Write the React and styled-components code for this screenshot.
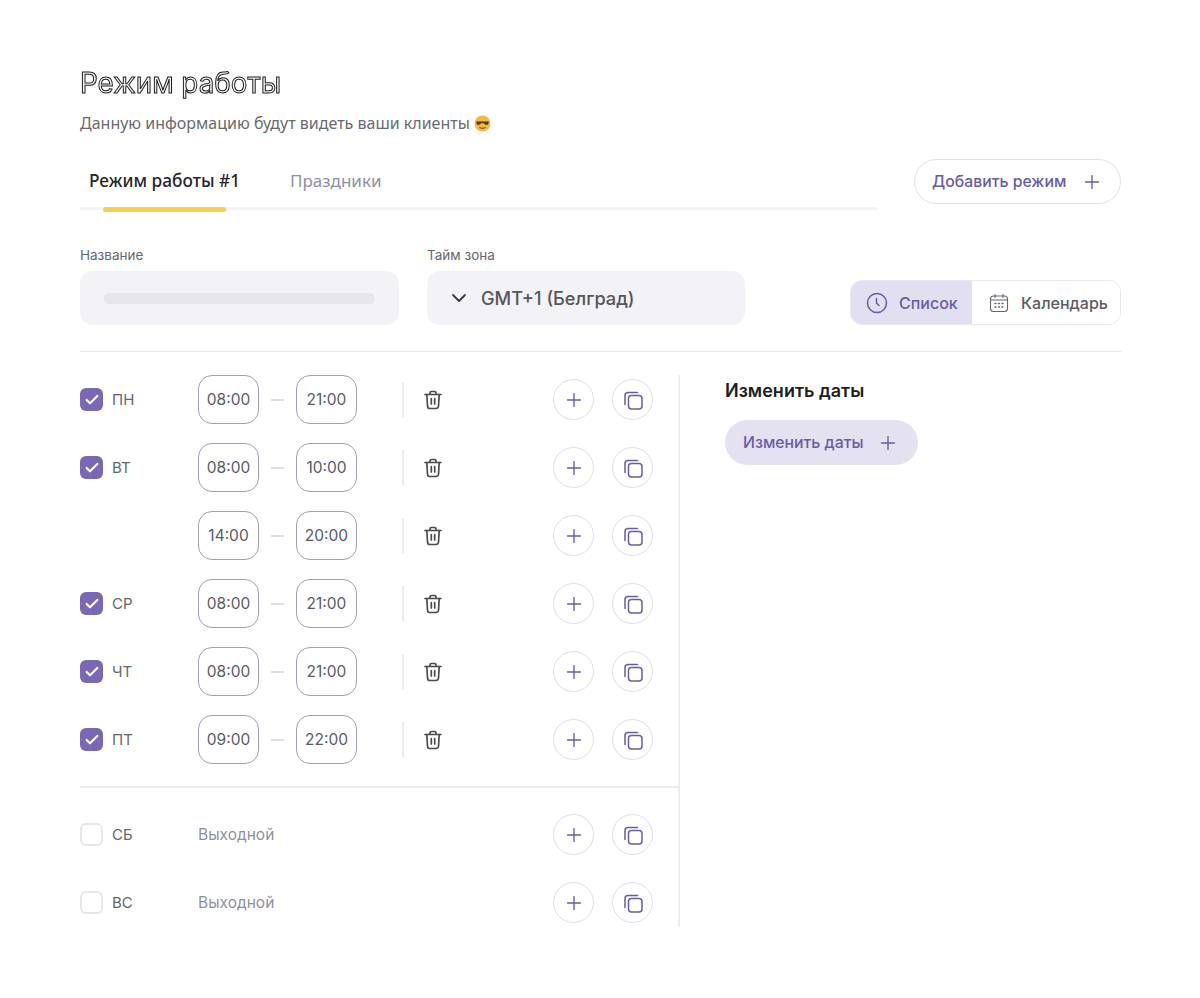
import React from 'react'
import styled, { createGlobalStyle } from 'styled-components'
import { Plus, ChevronDown, Check } from 'lucide-react'

const GlobalStyle = createGlobalStyle`
    html, body {
        margin: 0;
        padding: 0;
        background: #ffffff;
    }
    body {
        font-family: "Inter", "Noto Sans", sans-serif;
    }
`

const Page = styled.div`
    width: 1200px;
    height: 998px;
    box-sizing: border-box;
    padding: 68px 79px 0 80px;
`

const Title = styled.h1`
    margin: 0;
    height: 30px;
    font-size: 27.8px;
    line-height: 30px;
    font-weight: 400;
    color: #f4f4f4;
    -webkit-text-stroke: 1px #1a1a1e;
    will-change: transform;
`

const Subtitle = styled.p`
    display: flex;
    align-items: center;
    gap: 4px;
    margin: 15px 0 0;
    height: 20px;
    font-family: "Noto Sans", sans-serif;
    font-size: 16px;
    line-height: 20px;
    color: #6a6a72;
`

const TabsRow = styled.div`
    display: flex;
    justify-content: space-between;
    margin-top: 26px;
`

const Tabs = styled.div`
    position: relative;
    width: 797px;
    height: 51px;
    display: flex;
    gap: 50px;
    padding: 11px 0 0 9px;
    box-sizing: border-box;
    border-bottom: 3px solid #f4f4f7;
`

const Tab = styled.div`
    font-family: "Noto Sans", sans-serif;
    font-size: ${p => (p.$active ? '17.3px' : '17px')};
    line-height: 22px;
    font-weight: ${p => (p.$active ? 500 : 400)};
    color: ${p => (p.$active ? '#26262b' : '#8f8fa3')};
`

const TabMarker = styled.div`
    position: absolute;
    left: 23px;
    bottom: -5px;
    width: 123px;
    height: 5px;
    border-radius: 3px;
    background: #f5cf4e;
`

const AddButton = styled.button`
    width: 207px;
    height: 45px;
    box-sizing: border-box;
    display: flex;
    align-items: center;
    justify-content: space-between;
    padding: 0 17px;
    background: #fff;
    border: 1px solid #e2e0f0;
    border-radius: 23px;
    font: 500 15.8px "Inter", sans-serif;
    color: #6a5ba8;
`

const FieldsRow = styled.div`
    display: flex;
    align-items: flex-end;
    margin-top: 37px;
    padding-bottom: 26px;
    border-bottom: 1px solid #e6e6ea;
`

const Field = styled.div`
    width: ${p => p.$width}px;
    margin-right: 28px;
`

const Label = styled.div`
    font-size: 13.5px;
    line-height: 16px;
    color: #66666e;
    margin-bottom: 8px;
`

const FieldBox = styled.div`
    height: 54px;
    box-sizing: border-box;
    display: flex;
    align-items: center;
    gap: 10px;
    padding: 0 24px 0 20px;
    border-radius: 13px;
    background: #f2f2f7;
    font-size: 18.2px;
    font-weight: 500;
    color: #55555e;
`

const Skeleton = styled.div`
    flex: 1;
    height: 11px;
    margin-left: 4px;
    border-radius: 6px;
    background: #e6e6eb;
`

const Segmented = styled.div`
    margin-left: auto;
    width: 271px;
    height: 45px;
    box-sizing: border-box;
    display: flex;
    border: 1px solid #e8e8ee;
    border-radius: 12px;
    overflow: hidden;
`

const Segment = styled.div`
    width: ${p => (p.$active ? '122px' : '149px')};
    display: flex;
    align-items: center;
    gap: ${p => (p.$active ? '11px' : '12px')};
    padding-left: ${p => (p.$active ? '15px' : '17px')};
    box-sizing: border-box;
    background: ${p => (p.$active ? '#e2e0f0' : '#fff')};
    color: ${p => (p.$active ? '#6a5ba8' : '#5c5c64')};
    font-size: 16px;
    font-weight: 500;
`

const Columns = styled.div`
    display: flex;
    margin-top: 23px;
`

const Schedule = styled.div`
    width: 600px;
    height: 552px;
    border-right: 2px solid #ececf0;
    box-sizing: border-box;
`

const Row = styled.div`
    height: 49px;
    margin-bottom: 19px;
    display: flex;
    align-items: center;
`

const Divider = styled.div`
    height: 2px;
    margin: 22px 0 22px;
    background: #ececf0;
`

const CheckBox = styled.div`
    width: 23px;
    height: 23px;
    box-sizing: border-box;
    border-radius: 6px;
    display: flex;
    align-items: center;
    justify-content: center;
    background: ${p => (p.$checked ? '#7b68b5' : '#fff')};
    border: ${p => (p.$checked ? 'none' : '2px solid #e6e6ea')};
    color: #fff;
`

const Day = styled.div`
    width: 86px;
    margin-left: 9px;
    font-size: 15px;
    color: #66666e;
`

const DayColumn = styled.div`
    width: 118px;
    display: flex;
    align-items: center;
`

const TimeBox = styled.div`
    width: 61px;
    height: 49px;
    box-sizing: border-box;
    display: flex;
    align-items: center;
    justify-content: center;
    border: 1.5px solid #a0a0b0;
    border-radius: 14px;
    font-size: 15.5px;
    color: #5a5a64;
`

const Dash = styled.div`
    width: 13px;
    height: 2px;
    margin: 0 12px;
    background: #dedee3;
`

const Separator = styled.div`
    width: 2px;
    height: 35px;
    margin-left: 45px;
    background: #ececf0;
`

const TrashSlot = styled.div`
    margin-left: 19px;
    width: 20px;
    height: 20px;
    color: #4a4a50;
`

const Off = styled.div`
    font-size: 15.5px;
    color: #8f8fa3;
`

const Actions = styled.div`
    margin-left: auto;
    margin-right: 25px;
    display: flex;
    gap: 18px;
`

const RoundButton = styled.div`
    width: 41px;
    height: 41px;
    box-sizing: border-box;
    display: flex;
    align-items: center;
    justify-content: center;
    border: 1px solid #dfdcf0;
    border-radius: 50%;
    color: #6a5ba8;
`

const Side = styled.div`
    margin-left: 45px;
`

const SideTitle = styled.div`
    height: 33px;
    font-size: 18px;
    line-height: 32px;
    font-weight: 600;
    color: #1d1d22;
`

const ChangeButton = styled.div`
    width: 193px;
    height: 45px;
    margin-top: 12px;
    box-sizing: border-box;
    display: flex;
    align-items: center;
    justify-content: space-between;
    padding: 0 19px 0 18px;
    border-radius: 23px;
    background: #e4e1f1;
    color: #6a5ba8;
    font-size: 15.8px;
    font-weight: 500;
`

function ShadesEmoji() {
    return (
        <svg width="17" height="17" viewBox="0 0 16 16">
            <circle cx="8" cy="8" r="7.5" fill="#f5b93c" />
            <path d="M2 6h12l-.6 2.6c-.9.8-3 .8-4-.9h-2.800c-1 1.700-3.100 1.700-4 .9z" fill="#4b3a2a" />
            <path d="M5 11.500c1.800 1.200 4.200 1.200 6 0" stroke="#a5551f" strokeWidth="1.200" fill="none" />
        </svg>
    )
}

function ClockIcon() {
    return (
        <svg width="22" height="22" viewBox="0 0 22 22" fill="none" stroke="currentColor" strokeWidth="1.500" strokeLinecap="round">
            <circle cx="11" cy="11" r="9.500" />
            <path d="M10.500 6.500v4.500l2.500 2.500" />
        </svg>
    )
}

function CalendarIcon() {
    return (
        <svg width="20" height="20" viewBox="0 0 20 20" fill="none" stroke="#66666e" strokeWidth="1.100" strokeLinecap="round">
            <rect x="1.500" y="3" width="17" height="15.500" rx="3" />
            <path d="M1.500 7h17M6 1.500v3M14 1.500v3" />
            <path d="M6 10.500h1M9.500 10.500h1M13 10.500h1M6 14h1M9.500 14h1M13 14h1" strokeWidth="1.400" />
        </svg>
    )
}

function TrashIcon() {
    return (
        <svg width="20" height="20" viewBox="0 0 20 20" fill="none" stroke="currentColor" strokeWidth="1.700" strokeLinecap="round" strokeLinejoin="round">
            <path d="M2 4.500h16M7 4.500V3a1.500 1.500 0 0 1 1.500-1.500h3A1.500 1.500 0 0 1 13 3v1.500" />
            <path d="M3.800 4.500l.7 11.500a2.500 2.500 0 0 0 2.500 2.500h6a2.500 2.500 0 0 0 2.500-2.500l.7-11.500" />
            <path d="M8.300 8.500v5.500M11.700 8.500v5.500" />
        </svg>
    )
}

function CopyIcon() {
    return (
        <svg width="20" height="20" viewBox="0 0 20 20" fill="none" stroke="currentColor" strokeWidth="1.500" strokeLinecap="round" strokeLinejoin="round">
            <rect x="5.500" y="5.500" width="13.500" height="13.500" rx="3" />
            <path d="M14.500 2.500 H5 A3 3 0 0 0 2 5.500 V14.500" />
        </svg>
    )
}

function RowActions() {
    return (
        <Actions>
            <RoundButton><Plus size={22} strokeWidth={1.5} /></RoundButton>
            <RoundButton><CopyIcon /></RoundButton>
        </Actions>
    )
}

const workRows = [
    { day: 'ПН', from: '08:00', to: '21:00' },
    { day: 'ВТ', from: '08:00', to: '10:00' },
    { from: '14:00', to: '20:00' },
    { day: 'СР', from: '08:00', to: '21:00' },
    { day: 'ЧТ', from: '08:00', to: '21:00' },
    { day: 'ПТ', from: '09:00', to: '22:00' },
]

export default function App() {
    return (
        <Page>
            <GlobalStyle />
            <Title>Режим работы</Title>
            <Subtitle>Данную информацию будут видеть ваши клиенты <ShadesEmoji /></Subtitle>

            <TabsRow>
                <Tabs>
                    <Tab $active>Режим работы #1</Tab>
                    <Tab>Праздники</Tab>
                    <TabMarker />
                </Tabs>
                <AddButton>Добавить режим <Plus size={22} strokeWidth={1.5} /></AddButton>
            </TabsRow>

            <FieldsRow>
                <Field $width={319}>
                    <Label>Название</Label>
                    <FieldBox><Skeleton /></FieldBox>
                </Field>
                <Field $width={318}>
                    <Label>Тайм зона</Label>
                    <FieldBox><ChevronDown size={24} strokeWidth={1.8} color="#3a3a40" />GMT+1 (Белград)</FieldBox>
                </Field>
                <Segmented>
                    <Segment $active><ClockIcon />Список</Segment>
                    <Segment><CalendarIcon />Календарь</Segment>
                </Segmented>
            </FieldsRow>

            <Columns>
                <Schedule>
                    {workRows.map((row, i) => (
                        <Row key={i}>
                            <DayColumn>
                                {row.day && <CheckBox $checked><Check size={16} strokeWidth={3.2} /></CheckBox>}
                                {row.day && <Day>{row.day}</Day>}
                            </DayColumn>
                            <TimeBox>{row.from}</TimeBox>
                            <Dash />
                            <TimeBox>{row.to}</TimeBox>
                            <Separator />
                            <TrashSlot><TrashIcon /></TrashSlot>
                            <RowActions />
                        </Row>
                    ))}
                    <Divider />
                    {['СБ', 'ВС'].map(day => (
                        <Row key={day}>
                            <DayColumn>
                                <CheckBox />
                                <Day>{day}</Day>
                            </DayColumn>
                            <Off>Выходной</Off>
                            <RowActions />
                        </Row>
                    ))}
                </Schedule>
                <Side>
                    <SideTitle>Изменить даты</SideTitle>
                    <ChangeButton>Изменить даты <Plus size={22} strokeWidth={1.5} /></ChangeButton>
                </Side>
            </Columns>
        </Page>
    )
}
